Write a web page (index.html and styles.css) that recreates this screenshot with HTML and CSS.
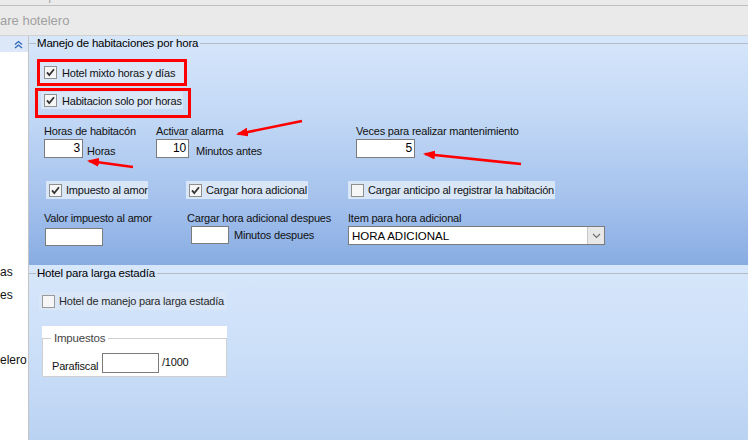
FILE: index.html
```html
<!DOCTYPE html>
<html lang="es">
<head>
<meta charset="utf-8">
<title>Software hotelero</title>
<link rel="stylesheet" href="styles.css">
</head>
<body>
<div class="titlestrip"><span class="titletext">Vista previa del software hotelero GENS</span></div>
<div class="header"><span class="apptitle">are hotelero</span></div>
<div class="main">
  <aside class="sidebar">
    <div class="side-top">
      <svg width="9" height="9" viewBox="0 0 9 9"><path d="M1 4.5 L4.5 1.5 L8 4.5 M1 8 L4.5 5 L8 8" fill="none" stroke="#2f65b8" stroke-width="1.3"/></svg>
    </div>
    <div class="side-item first">as</div>
    <div class="side-item">es</div>
    <div class="side-item last">elero</div>
  </aside>
  <section class="content">
    <div class="sec sec1">
      <div class="gtitle"><span>Manejo de habitaciones por hora</span></div>

      <div class="redbox rb1">
        <label class="chk-row">
          <svg class="cb" width="13" height="13" viewBox="0 0 13 13"><rect x="0.5" y="0.5" width="12" height="12" fill="#f6f6f6" stroke="#8e8f8f"/><path d="M3 6.3 L5.3 9 L10 3.3" fill="none" stroke="#333" stroke-width="1.8"/></svg>
          <span>Hotel mixto horas y días</span>
        </label>
      </div>
      <div class="redbox rb2">
        <label class="chk-row">
          <svg class="cb" width="13" height="13" viewBox="0 0 13 13"><rect x="0.5" y="0.5" width="12" height="12" fill="#f6f6f6" stroke="#8e8f8f"/><path d="M3 6.3 L5.3 9 L10 3.3" fill="none" stroke="#333" stroke-width="1.8"/></svg>
          <span>Habitacion solo por horas</span>
        </label>
      </div>

      <div class="fields-row">
        <div class="field f-horas">
          <span class="lbl">Horas de habitacón</span>
          <div class="inline">
            <div class="input w39">3</div><span class="unit">Horas</span>
          </div>
        </div>
        <div class="field f-alarma">
          <span class="lbl">Activar alarma</span>
          <div class="inline gap7">
            <div class="input w33">10</div><span class="unit">Minutos antes</span>
          </div>
        </div>
        <div class="field">
          <span class="lbl">Veces para realizar mantenimiento</span>
          <div class="inline">
            <div class="input w59">5</div>
          </div>
        </div>
      </div>

      <div class="checks-row">
        <label class="chk-pill c1">
          <svg class="cb" width="13" height="13" viewBox="0 0 13 13"><rect x="0.5" y="0.5" width="12" height="12" fill="#f6f6f6" stroke="#8e8f8f"/><path d="M3 6.3 L5.3 9 L10 3.3" fill="none" stroke="#333" stroke-width="1.8"/></svg>
          <span>Impuesto al amor</span>
        </label>
        <label class="chk-pill c2">
          <svg class="cb" width="13" height="13" viewBox="0 0 13 13"><rect x="0.5" y="0.5" width="12" height="12" fill="#f6f6f6" stroke="#8e8f8f"/><path d="M3 6.3 L5.3 9 L10 3.3" fill="none" stroke="#333" stroke-width="1.8"/></svg>
          <span>Cargar hora adicional</span>
        </label>
        <label class="chk-pill c3">
          <svg class="cb" width="13" height="13" viewBox="0 0 13 13"><rect x="0.5" y="0.5" width="12" height="12" fill="#f6f6f6" stroke="#8e8f8f"/></svg>
          <span>Cargar anticipo al registrar la habitación</span>
        </label>
      </div>

      <div class="extras-row">
        <div class="field colA">
          <span class="lbl">Valor impuesto al amor</span>
          <div class="input w58 h18 ml1 mt3"></div>
        </div>
        <div class="field colB">
          <span class="lbl">Cargar hora adicional despues</span>
          <div class="inline center mt3">
            <div class="input w38 h18 ml4"></div><span class="unit">Minutos despues</span>
          </div>
        </div>
        <div class="field colC">
          <span class="lbl">Item para hora adicional</span>
          <div class="select">
            <span class="sel-text">HORA ADICIONAL</span>
            <span class="sel-btn"><svg width="9" height="6" viewBox="0 0 9 6"><path d="M1 1 L4.5 4.5 L8 1" fill="none" stroke="#6e6e6e" stroke-width="1.1"/></svg></span>
          </div>
        </div>
      </div>
    </div>

    <div class="sec sec2">
      <div class="gtitle g2"><span>Hotel para larga estadía</span></div>
      <label class="chk-pill c4">
        <svg class="cb" width="13" height="13" viewBox="0 0 13 13"><rect x="0.5" y="0.5" width="12" height="12" fill="#f6f6f6" stroke="#9a9a9a"/></svg>
        <span>Hotel de manejo para larga estadía</span>
      </label>
      <div class="tax">
        <div class="tax-frame">
          <div class="tax-title"><span>Impuestos</span></div>
          <div class="tax-row">
            <span class="tax-lbl">Parafiscal</span>
            <div class="input w57 h20"></div>
            <span class="per">/1000</span>
          </div>
        </div>
      </div>
    </div>
  </section>
</div>

<svg class="annot" width="748" height="440" viewBox="0 0 748 440">
  <defs>
    <marker id="ah" markerWidth="12" markerHeight="9" refX="10" refY="4.5" orient="auto" markerUnits="userSpaceOnUse">
      <path d="M0 0 L12 4.5 L0 9 Z" fill="#f00"/>
    </marker>
  </defs>
  <line x1="302" y1="121" x2="238" y2="134" stroke="#f00" stroke-width="2.6" marker-end="url(#ah)"/>
  <line x1="133" y1="167" x2="89" y2="161" stroke="#f00" stroke-width="2.6" marker-end="url(#ah)"/>
  <line x1="521" y1="164" x2="425" y2="154" stroke="#f00" stroke-width="2.6" marker-end="url(#ah)"/>
</svg>
</body>
</html>
```
FILE: styles.css
```css
* { box-sizing: border-box; }

body {
  margin: 0;
  width: 748px;
  height: 440px;
  overflow: hidden;
  position: relative;
  background: #fff;
  font-family: "Liberation Sans", Arial, sans-serif;
  font-size: 11px;
  letter-spacing: -0.2px;
  color: #111;
}

.titlestrip {
  height: 6px;
  background: #eaeaea;
  border-bottom: 1px solid #c0c0c0;
  overflow: hidden;
  padding-left: 10px;
}
.titletext {
  display: block;
  margin-top: -12px;
  font-size: 13px;
  line-height: 16px;
  color: #a8a8a8;
  letter-spacing: 1px;
}

.header {
  height: 30px;
  background: #eaeaea;
  border-bottom: 1px solid #d2d2d2;
  display: flex;
  align-items: center;
  padding-bottom: 1px;
}
.apptitle {
  font-size: 13px;
  color: #a0a0a0;
  letter-spacing: 0;
}

.main {
  display: flex;
  height: 404px;
}

.sidebar {
  width: 29px;
  flex: none;
  border-right: 1px solid #c4c4c4;
  background: #fff;
  overflow: hidden;
  white-space: nowrap;
}
.side-top {
  height: 16px;
  background: #dce8f8;
  display: flex;
  align-items: center;
  padding-left: 14px;
}
.side-item {
  height: 23px;
  line-height: 14px;
  font-size: 12px;
  color: #111;
  letter-spacing: 0;
}
.side-item.first { margin-top: 213px; }
.side-item.last { margin-top: 42px; }

.content {
  flex: 1;
  display: flex;
  flex-direction: column;
}

.sec1 {
  height: 229px;
  background: linear-gradient(#d7e7fb 0%, #c2d8f5 35%, #a6c3ee 70%, #88ace2 100%);
}
.sec2 {
  flex: 1;
  background: linear-gradient(#d7e7fb 0%, #cbdff8 50%, #bad2f2 100%);
}

.gtitle {
  height: 14px;
  display: flex;
  align-items: center;
  color: #000;
}
.gtitle::before {
  content: "";
  width: 7px;
  border-top: 1px solid #b4bcc6;
  margin-right: 1px;
}
.gtitle::after {
  content: "";
  flex: 1;
  border-top: 1px solid #b4bcc6;
  margin-left: 2px;
}
.gtitle span { font-size: 11.5px; }
.g2 { height: 16px; }

.redbox {
  border: 3px solid #f00;
  display: flex;
}
.rb1 {
  width: 150px;
  height: 27px;
  margin: 9px 0 0 8px;
}
.rb2 {
  width: 156px;
  height: 30px;
  margin: 2px 0 0 6px;
  padding: 1px 5px 0 3px;
  align-items: flex-start;
}
.chk-row {
  flex: 1;
  display: flex;
  align-items: center;
  gap: 5px;
  padding-left: 4px;
  background: #dae7f8;
}
.rb2 .chk-row {
  height: 17px;
  flex: none;
  width: 142px;
  padding-left: 3px;
}
.cb { flex: none; display: block; }

.lbl { display: block; height: 14px; line-height: 14px; white-space: nowrap; }

.fields-row {
  display: flex;
  margin: 6px 0 0 15px;
}
.field { display: flex; flex-direction: column; }
.f-horas { width: 112px; }
.f-alarma { width: 200px; }
.field .inline { margin-top: 1px; }

.inline {
  display: flex;
  align-items: flex-end;
  gap: 4px;
}
.inline.gap7 { gap: 7px; }
.inline.center { align-items: center; gap: 5px; }
.unit { line-height: 14px; white-space: nowrap; }

.input {
  height: 19px;
  background: #fff;
  border: 1px solid #7b7b7b;
  text-align: right;
  padding-right: 2px;
  font-size: 12px;
  line-height: 17px;
  color: #000;
  flex: none;
}
.w39 { width: 39px; }
.w33 { width: 33px; }
.w59 { width: 59px; }
.w58 { width: 58px; }
.w38 { width: 38px; }
.w57 { width: 57px; }
.h18 { height: 18px; }
.h20 { height: 20px; }
.ml1 { margin-left: 1px; }
.ml4 { margin-left: 4px; }
.mt3 { margin-top: 3px; }

.checks-row {
  display: flex;
  margin: 23px 0 0 17px;
}
.chk-pill {
  height: 18px;
  display: flex;
  align-items: center;
  gap: 4px;
  padding-left: 3px;
  background: #d8e6f8;
  overflow: hidden;
  white-space: nowrap;
}
.c1 { width: 102px; }
.c2 { width: 122px; margin-left: 38px; }
.c3 { width: 207px; margin-left: 40px; }
.c4 { width: 188px; margin: 11px 0 0 10px; color: #2a2a2a; }

.extras-row {
  display: flex;
  margin: 12px 0 0 15px;
}
.colA { width: 143px; }
.colB { width: 161px; }
.colC { width: 260px; }

.select {
  margin-top: 1px;
  width: 257px;
  height: 19px;
  background: #fff;
  border: 1px solid #7b7b7b;
  display: flex;
  align-items: center;
}
.sel-text {
  flex: 1;
  padding-left: 3px;
  font-size: 11.5px;
  color: #000;
  letter-spacing: 0;
}
.sel-btn {
  width: 17px;
  height: 17px;
  background: #e8e8e8;
  border-left: 1px solid #c8c8c8;
  display: flex;
  align-items: center;
  justify-content: center;
}

.tax {
  width: 185px;
  height: 51px;
  margin: 16px 0 0 13px;
  background: #fff;
  padding-top: 12px;
}
.tax-frame {
  height: 39px;
  border: 1px solid #d0d0d0;
}
.tax-title {
  margin-top: -8px;
  height: 14px;
  padding-left: 8px;
  display: flex;
  align-items: center;
}
.tax-title span {
  background: #fff;
  padding: 0 3px;
  color: #444;
  font-size: 11.5px;
}
.tax-row {
  display: flex;
  align-items: center;
  margin-top: 8px;
  padding-left: 9px;
}
.tax-lbl { width: 50px; white-space: nowrap; line-height: 14px; margin-top: 5px; }
.per { margin-left: 3px; margin-top: -2px; }

.annot {
  position: absolute;
  top: 0;
  left: 0;
  pointer-events: none;
}
```
